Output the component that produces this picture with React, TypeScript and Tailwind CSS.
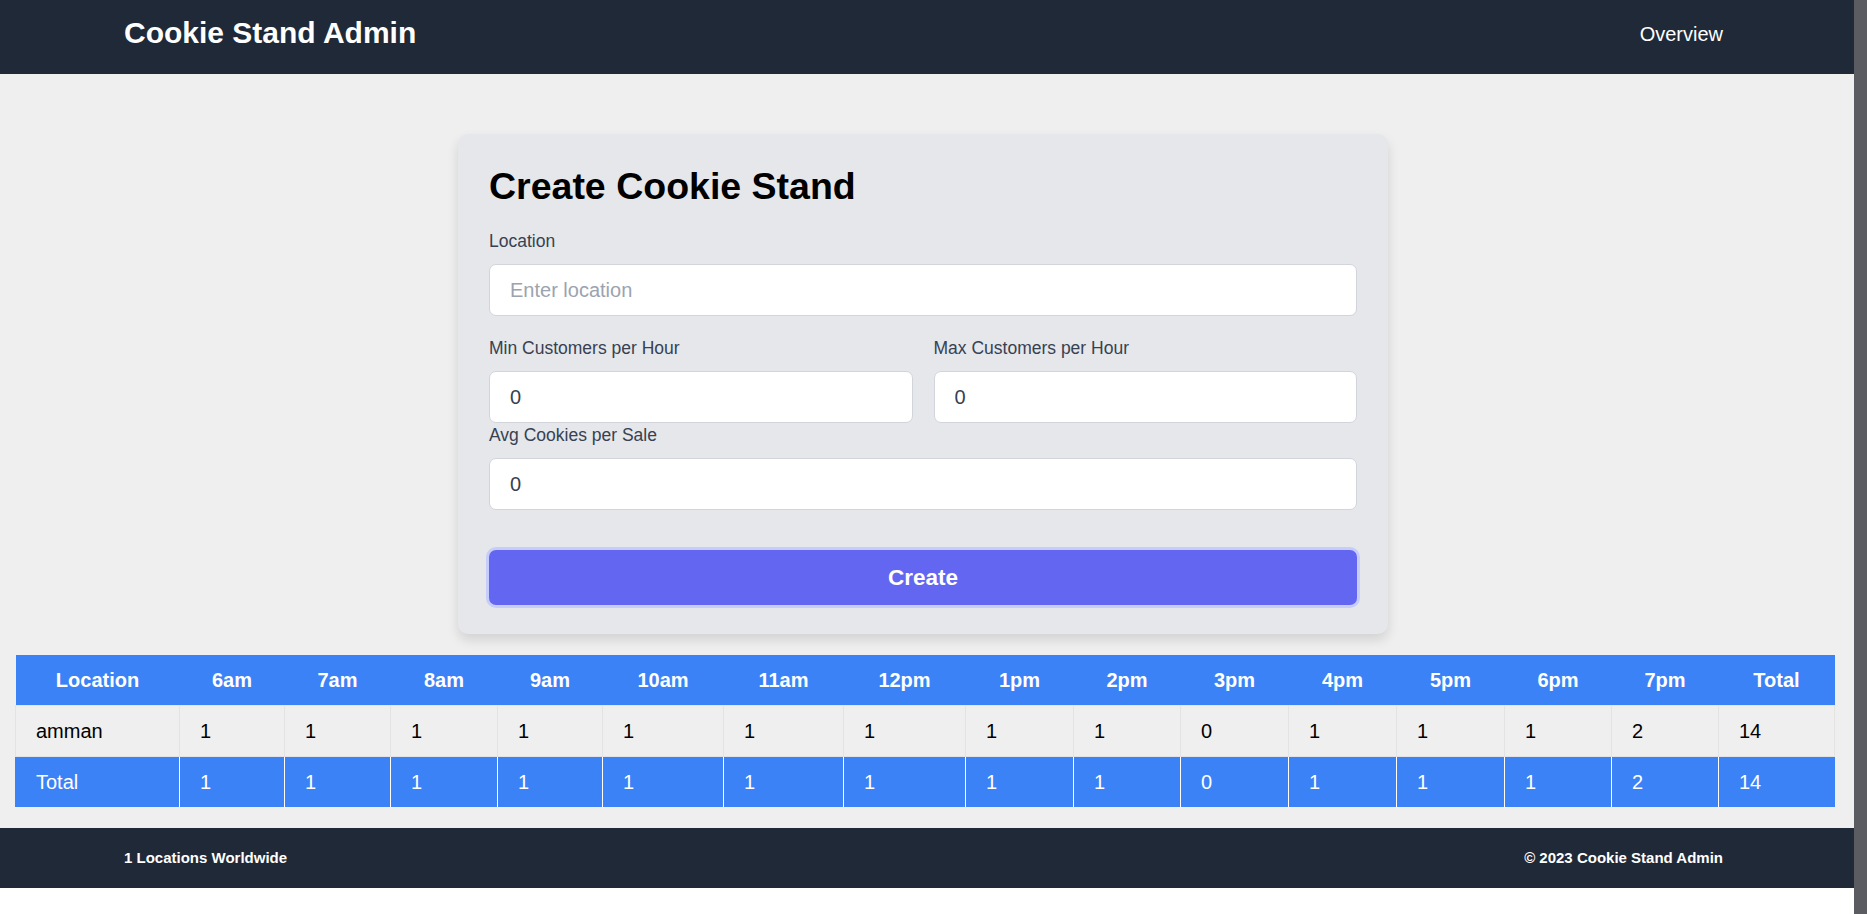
import React from "react";

const hours = ["6am", "7am", "8am", "9am", "10am", "11am", "12pm", "1pm", "2pm", "3pm", "4pm", "5pm", "6pm", "7pm"];
const colWidths = [164, 105, 106, 107, 105, 121, 120, 122, 108, 107, 108, 108, 108, 107, 107, 116];
const amman = [1, 1, 1, 1, 1, 1, 1, 1, 1, 0, 1, 1, 1, 2];

const inputClass =
  "block w-full h-[52px] rounded-[7px] border border-[#d1d5db] bg-white px-[20px] text-[20px] leading-[30px] text-[#374151] placeholder-[#9ca3af] outline-none";
const labelClass = "block mb-[10px] text-[17.5px] leading-[25px] text-[#374151]";

const App = () => {
  return (
    <div className="flex min-h-[914px] bg-white font-['Liberation_Sans',Arial,sans-serif]">
      <div className="w-[1854px] shrink-0">
        <header className="flex h-[74px] items-start justify-between bg-[#1f2937] pl-[124px] pr-[131px]">
          <h1 className="mt-[15px] text-[30px] font-bold leading-[36px] text-white">Cookie Stand Admin</h1>
          <nav className="mt-[19px] text-[20px] leading-[30px] text-white">Overview</nav>
        </header>

        <main className="bg-[#efefef] pt-[60px] pb-[21px]">
          <form
            action="#"
            className="ml-[458px] w-[930px] rounded-[10px] bg-[#e5e7eb] p-[31px] pt-[30px] pb-[29px] shadow-[0_6px_12px_rgba(0,0,0,0.12)]"
          >
            <h2 className="mb-[20px] text-[37.5px] font-bold leading-[45px] text-black">Create Cookie Stand</h2>
            <div className="mb-[20px]">
              <label htmlFor="location" className={labelClass}>
                Location
              </label>
              <input id="location" type="text" placeholder="Enter location" className={inputClass} />
            </div>
            <div className="grid grid-cols-2 gap-x-[21px]">
              <div>
                <label htmlFor="min" className={labelClass}>
                  Min Customers per Hour
                </label>
                <input id="min" type="number" defaultValue={0} className={inputClass} />
              </div>
              <div>
                <label htmlFor="max" className={labelClass}>
                  Max Customers per Hour
                </label>
                <input id="max" type="number" defaultValue={0} className={inputClass} />
              </div>
            </div>
            <div>
              <label htmlFor="avg" className={labelClass}>
                Avg Cookies per Sale
              </label>
              <input id="avg" type="number" defaultValue={0} className={inputClass} />
            </div>
            <button
              type="submit"
              className="mt-[40px] block h-[55px] w-full rounded-[7px] bg-[#6366f1] text-[22.5px] font-bold leading-[35px] text-white ring-[3px] ring-[#c7cdfb]"
            >
              Create
            </button>
          </form>

          <table className="mt-[21px] ml-[15px] w-[1819px] table-fixed text-[20px] leading-[30px]">
            <colgroup>
              {colWidths.map((w, i) => (
                <col key={i} style={{ width: w }} />
              ))}
            </colgroup>
            <thead>
              <tr className="bg-[#3b82f6] text-white">
                <th className="py-[10px] font-bold">Location</th>
                {hours.map((h) => (
                  <th key={h} className="py-[10px] font-bold">
                    {h}
                  </th>
                ))}
                <th className="py-[10px] font-bold">Total</th>
              </tr>
            </thead>
            <tbody>
              <tr className="text-black">
                <td className="border border-[#e3e3e3] border-t-[#dbe6f6] px-[20px] py-[10px]">amman</td>
                {amman.map((n, i) => (
                  <td key={i} className="border border-[#e3e3e3] border-t-[#dbe6f6] px-[20px] py-[10px]">
                    {n}
                  </td>
                ))}
                <td className="border border-[#e3e3e3] border-t-[#dbe6f6] px-[20px] py-[10px]">14</td>
              </tr>
              <tr className="bg-[#3b82f6] text-white">
                <td className="border-x border-white border-l-[#3b82f6] border-t border-t-[#dbe6f6] px-[20px] py-[10px]">Total</td>
                {amman.map((n, i) => (
                  <td key={i} className="border-x border-t border-white border-t-[#dbe6f6] px-[20px] py-[10px]">
                    {n}
                  </td>
                ))}
                <td className="border-x border-white border-r-[#3b82f6] border-t border-t-[#dbe6f6] px-[20px] py-[10px]">14</td>
              </tr>
            </tbody>
          </table>
        </main>

        <footer className="flex h-[60px] items-start justify-between bg-[#1f2937] pl-[124px] pr-[131px] pt-[20px] text-[15px] font-bold leading-[20px] text-white">
          <p>1 Locations Worldwide</p>
          <p>© 2023 Cookie Stand Admin</p>
        </footer>
      </div>
      <div className="w-[13px] shrink-0 bg-[#5b5c61]" />
    </div>
  );
};

export default App;
